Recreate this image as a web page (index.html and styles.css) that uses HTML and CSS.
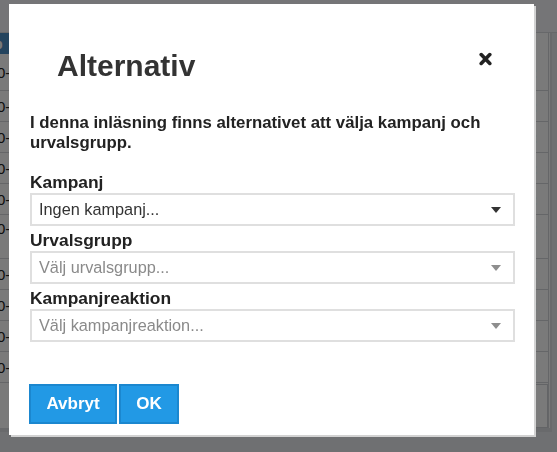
FILE: index.html
```html
<!DOCTYPE html>
<html lang="sv">
<head>
<meta charset="utf-8">
<title>Alternativ</title>
<link rel="stylesheet" href="styles.css">
</head>
<body>
<div class="page">
  <div class="topbar"></div>
  <div class="content">
    <div class="table">
      <div class="thead"><span class="hcell"><span class="cell">Typ</span></span></div>
      <div class="row"><span class="cell">2020-</span><span class="mark">:</span></div>
      <div class="row"><span class="cell">2020-</span><span class="mark">:</span></div>
      <div class="row"><span class="cell">2020-</span><span class="mark">:</span></div>
      <div class="row"><span class="cell">2020-</span><span class="mark">:</span></div>
      <div class="row"><span class="cell">2020-</span><span class="mark">:</span></div>
      <div class="row tall"><span class="cell">2020-</span><span class="mark">:</span></div>
      <div class="row"><span class="cell">2020-</span><span class="mark">:</span></div>
      <div class="row"><span class="cell">2020-</span><span class="mark">:</span></div>
      <div class="row"><span class="cell">2020-</span><span class="mark">:</span></div>
      <div class="row"><span class="cell">2020-</span><span class="mark">:</span></div>
      <div class="row foot"><span class="cell">16</span><span class="footbox"></span></div>
    </div>
  </div>
</div>
<div class="overlay"></div>
<div class="dialog">
  <div class="dialog-header">
    <h1 class="title">Alternativ</h1>
    <button class="close" aria-label="Stäng">
      <svg width="13" height="14" viewBox="0 0 13 14"><path d="M2.2 2.6 L10.8 11.4 M10.8 2.6 L2.2 11.4" stroke="#222" stroke-width="3.6" stroke-linecap="round"/></svg>
    </button>
  </div>
  <div class="dialog-body">
    <p class="intro">I denna inläsning finns alternativet att välja kampanj och urvalsgrupp.</p>
    <div class="field">
      <label class="label">Kampanj</label>
      <div class="select"><span class="value">Ingen kampanj...</span><span class="caret"></span></div>
    </div>
    <div class="field">
      <label class="label">Urvalsgrupp</label>
      <div class="select placeholder"><span class="value">Välj urvalsgrupp...</span><span class="caret"></span></div>
    </div>
    <div class="field">
      <label class="label">Kampanjreaktion</label>
      <div class="select placeholder"><span class="value">Välj kampanjreaktion...</span><span class="caret"></span></div>
    </div>
  </div>
  <div class="dialog-footer">
    <button class="btn btn-cancel">Avbryt</button>
    <button class="btn btn-ok">OK</button>
  </div>
</div>
</body>
</html>
```
FILE: styles.css
```css
html, body {
  margin: 0;
  padding: 0;
  height: 100%;
  overflow: hidden;
}
body {
  font-family: "Liberation Sans", Arial, sans-serif;
  background: #e9eaee;
}
.page {
  height: 100%;
  display: flex;
  flex-direction: column;
}
.topbar {
  height: 32px;
  border-bottom: 1px solid #d8d9de;
  background: #f4f5f8;
}
.content {
  width: 552px;
  height: 399px;
  box-sizing: border-box;
  border-right: 2px solid #dcdde2;
  border-bottom: 4px solid #dcdde2;
  background: #ffffff;
  overflow: hidden;
}
.table {
  display: flex;
  flex-direction: column;
  width: 548px;
  border-right: 1px solid #d4d5da;
}
.thead {
  height: 21px;
  display: flex;
  font-size: 15px;
  font-weight: bold;
  color: #fff;
}
.hcell {
  width: 500px;
  background: #4d8fc4;
  display: flex;
  align-items: center;
}
.row {
  height: 30px;
  border-bottom: 1px solid #d4d5da;
  display: flex;
  align-items: center;
  justify-content: space-between;
  font-size: 15px;
  color: #222;
}
.thead + .row { height: 36px; }
.row.tall {
  height: 44px;
  align-items: flex-start;
  padding-top: 5px;
  box-sizing: border-box;
}
.row.foot {
  height: 46px;
  border-bottom: none;
}
.footbox {
  width: 14px;
  height: 44px;
  box-sizing: border-box;
  border: 1px solid #d0d1d6;
}
.cell {
  margin-left: -28px;
}
.hcell .cell { margin-left: -23px; }
.mark {
  margin-right: 11px;
  font-weight: bold;
}
.overlay {
  position: fixed;
  inset: 0;
  background: rgba(0, 0, 0, 0.52);
}
.dialog {
  position: absolute;
  left: 9px;
  top: 4px;
  width: 525px;
  height: 431px;
  background: #fff;
  box-shadow: 2px 2px 0 #d2d2d2;
  display: flex;
  flex-direction: column;
}
.dialog-header {
  display: flex;
  justify-content: space-between;
  align-items: flex-start;
  padding: 45px 42px 0 48px;
}
.title {
  margin: 0;
  font-size: 30px;
  line-height: 34px;
  font-weight: bold;
  color: #333;
}
.close {
  border: 0;
  background: none;
  padding: 0;
  margin-top: 3px;
  width: 13px;
  height: 14px;
  display: block;
}
.close svg { display: block; }
.dialog-body {
  padding: 30px 19px 0 21px;
}
.intro {
  margin: 0 0 21px;
  font-size: 16.8px;
  line-height: 20px;
  font-weight: bold;
  color: #222;
}
.field {
  display: flex;
  flex-direction: column;
  margin-bottom: 6px;
}
.label {
  font-size: 17.4px;
  line-height: 17px;
  font-weight: bold;
  color: #222;
  margin-bottom: 2px;
}
.select {
  height: 33px;
  box-sizing: border-box;
  border: 2px solid #dfdfdf;
  display: flex;
  align-items: center;
  justify-content: space-between;
  padding: 0 12px 0 7px;
  font-size: 16.3px;
  color: #333;
}
.select.placeholder { color: #8a8a8a; }
.caret {
  width: 0;
  height: 0;
  border-left: 5.5px solid transparent;
  border-right: 5.5px solid transparent;
  border-top: 6px solid #333;
  margin-top: 1px;
}
.select.placeholder .caret { border-top-color: #8e8e8e; }
.dialog-footer {
  display: flex;
  gap: 2px;
  padding: 36px 0 0 20px;
}
.btn {
  height: 40px;
  border: 2px solid #1b87cf;
  background: #2299e5;
  color: #fff;
  font-family: "Liberation Sans", Arial, sans-serif;
  font-size: 17px;
  font-weight: bold;
  padding: 0;
}
.btn-cancel { width: 88px; }
.btn-ok { width: 60px; }
```
